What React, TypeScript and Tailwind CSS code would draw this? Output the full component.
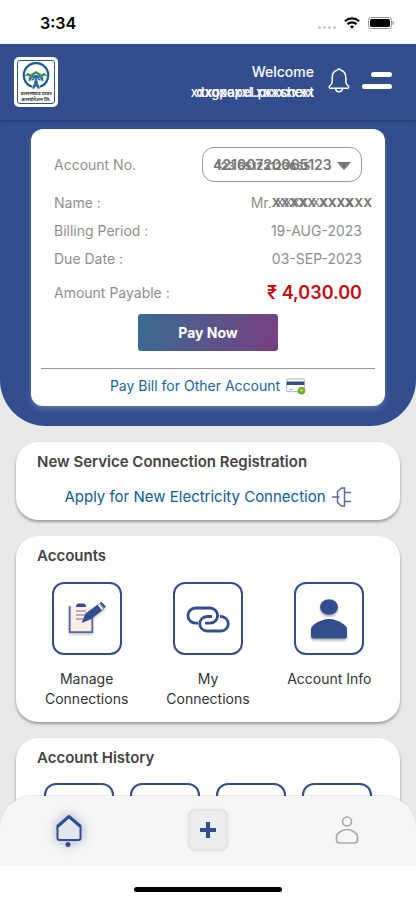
import type { ReactNode } from "react";

const INK = "#334e8f";

const Logo = () => (
  <div className="w-11 h-[50px] rounded-[5px] bg-white p-[3px]">
    <div className="flex h-full flex-col items-center rounded-[3px] border border-[#2d5590]">
      <svg viewBox="0 0 34 32" className="h-[29px] w-8 shrink-0" fill="none">
        <path d="M12.500 28.500A13.500 13.500 0 1 1 21.500 28.500" stroke="#1d5c9c" strokeWidth="2.400" />
        <path
          d="M2 19l6-6 3 2 6-4 6 4 3-2 6 6-5-3-4 2-6-4-6 4-4-2z"
          fill="#2e9440"
        />
        <path
          d="M9 22c-1-3 1-5 3-4 1-3.500 9-3.500 10 0 2-1 4 1 3 4l-4-1v1l-2-2v5l2 3.500v2h-2l-2-3-2 3h-2v-2l2-3.500v-5l-2 2v-1z"
          fill="#2b67a5"
        />
        <path d="M11 20.500l3-2M23 20.500l-3-2M15.500 19v3M18.500 19v3" stroke="#fff" strokeWidth="0.800" />
      </svg>
      <p className="text-center font-['Noto_Sans','Noto_Sans_Devanagari',sans-serif] text-[5px] leading-[6px] font-bold whitespace-nowrap text-[#333]">
        उत्तराखण्ड पावर
        <br />
        कारपोरेशन लि.
      </p>
    </div>
  </div>
);

const StatusBar = () => (
  <div className="flex h-11 shrink-0 items-center justify-between bg-white pt-[2px] pr-[22px] pl-10">
    <span className="text-base font-semibold text-black">3:34</span>
    <div className="flex items-center gap-2">
      <div className="flex gap-[2px] pt-2">
        {[0, 1, 2, 3].map((dot) => (
          <span key={dot} className="size-[3px] rounded-full bg-[#c4c4c4]" />
        ))}
      </div>
      <svg viewBox="0 0 16 12" className="h-3 w-4" fill="none" stroke="#000" strokeWidth="2.200">
        <path d="M1 4.200a10.200 10.200 0 0 1 14 0" />
        <path d="M3.500 7.100a6.500 6.500 0 0 1 9 0" />
        <path d="M8 11.800L5.800 9.600a3.200 3.200 0 0 1 4.400 0z" fill="#000" stroke="none" />
      </svg>
      <svg viewBox="0 0 26 12" className="h-3 w-[26px]">
        <rect x="0.500" y="0.500" width="23" height="11" rx="3" fill="#fff" stroke="#8d8d8d" />
        <rect x="2" y="2" width="20" height="8" rx="1.800" fill="#000" />
        <path d="M24.600 4c1.500.5 1.500 3.500 0 4z" fill="#777" />
      </svg>
    </div>
  </div>
);

const Header = () => (
  <header className="relative z-10 flex h-[76px] shrink-0 items-center bg-[#334e8f] pr-6 pl-[14px] text-white shadow-[0_1px_3px_rgba(0,0,0,0.3)]">
    <Logo />
    <div className="ml-auto text-right text-sm leading-5 font-medium">
      <p>Welcome</p>
      <p className="relative text-[13px]">
        dxgpapel.pxxshext
        <span aria-hidden="true" className="absolute top-0 right-0">
          xxxoxoxxl.xxxxxxxx
        </span>
      </p>
    </div>
    <button type="button" aria-label="Notifications" className="mb-1 ml-[14px]">
      <svg viewBox="0 0 22 26" className="h-[26px] w-[22px]" fill="none" stroke="#fff" strokeWidth="1.500" strokeLinejoin="round">
        <path d="M9.200 3.200a1.900 1.900 0 0 1 3.600 0c3.500.9 5 3.600 5 7v4.600c0 2 .8 3 2.600 4.400.9.9.4 2-.7 2H2.300c-1.100 0-1.600-1.100-.7-2 1.800-1.400 2.600-2.400 2.600-4.400v-4.600c0-3.400 1.500-6.100 5-7z" />
        <path d="M7.600 21.400c.4 4.600 6.400 4.600 6.800 0" />
      </svg>
    </button>
    <button type="button" aria-label="Menu" className="mb-1 ml-3 flex flex-col items-end gap-[7px]">
      <span className="h-[5px] w-[21px] rounded-full bg-white" />
      <span className="h-[5px] w-[30px] rounded-full bg-white" />
    </button>
  </header>
);

const Row = ({ label, children }: { label: string; children: ReactNode }) => (
  <div className="flex h-7 items-center justify-between">
    <dt>{label}</dt>
    <dd>{children}</dd>
  </div>
);

const BillCard = () => (
  <section className="rounded-b-[46px] bg-[#334e8f] px-[31px] pt-[9px] pb-5">
    <div className="rounded-xl bg-white px-[10px] pb-[10px] text-sm text-[#8e8e8e] shadow-[0_3px_5px_rgba(160,170,200,0.4)]">
      <div className="px-[13px] pt-[18px]">
        <div className="mb-[7px] flex items-center justify-between">
          <label htmlFor="account">Account No.</label>
          <div className="relative">
            <select
              id="account"
              className="h-[35px] w-40 appearance-none rounded-xl border border-[#999] bg-white pl-[10px] text-sm font-semibold text-[#777]"
            >
              <option>42100720065123</option>
            </select>
            <span aria-hidden="true" className="pointer-events-none absolute top-[11px] left-[14px] text-[11px] leading-4 font-bold text-[#777]">
              123 65123123655
            </span>
            <svg viewBox="0 0 14 8" className="pointer-events-none absolute top-[15px] right-[11px] h-2 w-[14px]">
              <path d="M0 0h14L8 7.200q-1 .8-2 0z" fill="#777" />
            </svg>
          </div>
        </div>
        <dl>
          <Row label="Name :">
            <span className="-mr-[10px] flex items-center">
              Mr.
              <span className="relative text-xs font-bold text-[#777]">
                XXXXX XXXXXX
                <span aria-hidden="true" className="absolute top-0 left-1 font-normal">
                  XXXX XXXXX
                </span>
              </span>
            </span>
          </Row>
          <Row label="Billing Period :">19-AUG-2023</Row>
          <Row label="Due Date :">03-SEP-2023</Row>
          <div className="mt-[6px]">
            <Row label="Amount Payable :">
              <span className="text-lg font-semibold text-[#c80a0f]">₹ 4,030.00</span>
            </Row>
          </div>
        </dl>
        <button
          type="button"
          className="mx-auto mt-[7px] block h-[37px] w-[140px] rounded-[3px] bg-linear-[100deg] from-[#396b91] to-[#793f82] text-sm font-bold text-white"
        >
          Pay Now
        </button>
      </div>
      <hr className="mt-[17px] mb-[7px] border-[#999]" />
      <a href="#other" className="flex h-5 items-center justify-center gap-[6px] text-sm text-[#1666a3]">
        Pay Bill for Other Account
        <svg viewBox="0 0 20 17" className="h-[17px] w-5">
          <rect x="0.700" y="1" width="17.600" height="12.600" rx="1" fill="#fff" stroke="#a9b1cc" />
          <path d="M0.700 3.500h17.600v3.500H.7z" fill="#334e8f" />
          <path d="M3 11.500h4" stroke="#a9b1cc" />
          <circle cx="15.500" cy="12.700" r="3.800" fill="#68ac1c" />
          <path d="M14 11.300h3M14 12.600h3M14.500 12.600l1.600 2" stroke="#d5ecb5" strokeWidth="0.700" />
        </svg>
      </a>
    </div>
  </section>
);

const Panel = ({ title, children }: { title: string; children: ReactNode }) => (
  <section className="rounded-[22px] bg-white px-[10px] pt-[10px] shadow-[0_2px_3px_rgba(0,0,0,0.35)]">
    <h2 className="pl-[11px] text-[15px] leading-5 font-semibold text-[#444]">{title}</h2>
    {children}
  </section>
);

const ManageIcon = () => (
  <svg viewBox="0 0 38 36" className="h-9 w-[38px] drop-shadow-[0_2px_1px_rgba(0,0,0,0.2)]">
    <path d="M2 6h22v25H2z" fill="#fbeee7" />
    <path d="M1.700 5v26.200h22.600V15" fill="none" stroke="#5465a4" strokeWidth="1.800" />
    <path d="M8 6q0-3.500 3-3.500h4q3 0 3 3.500z" fill={INK} />
    <path d="M8 10h10M8 14h10M8 18h7" stroke="#777078" strokeWidth="1.200" />
    <path d="M13.500 22l4-9.500L31 2.500l5 5.500L22.500 18.500z" fill={INK} />
    <path d="M30.500 3.500L34.500 8.500" stroke="#fff" strokeWidth="2" />
    <path d="M32.500 1.500l4.500 5" stroke={INK} strokeWidth="2.500" />
  </svg>
);

const LinkIcon = () => (
  <svg viewBox="0 0 44 28" className="h-7 w-11" fill="none" stroke={INK} strokeWidth="2.800">
    <path d="M12 18.200H9.500a7.300 7.300 0 0 1 0-15.200h14.500a7.300 7.300 0 0 1 0 15.200h-5" />
    <path d="M34 11.500h1a7 7 0 0 1 0 14.500H21a7 7 0 0 1 0-14.500h5" />
  </svg>
);

const PersonIcon = () => (
  <svg viewBox="0 0 36 42" className="h-[42px] w-9 drop-shadow-[0_2px_1px_rgba(0,0,0,0.3)]" fill={INK}>
    <ellipse cx="18" cy="9" rx="9" ry="7.800" />
    <path d="M0 38v-6.500q0-3 3-5 7.500-5.500 15-5.500t15 5.500q3 2 3 5V38q0 2.500-2.500 2.500h-31Q0 40.500 0 38z" />
  </svg>
);

const accounts = [
  { label: "Manage Connections", icon: <ManageIcon /> },
  { label: "My Connections", icon: <LinkIcon /> },
  { label: "Account Info", icon: <PersonIcon /> },
];

const history = ["Bills", "Payments", "Usage", "Requests"];

const BottomNav = () => (
  <nav className="relative z-20 -mt-8 shrink-0">
    <div className="grid h-[70px] grid-cols-3 place-items-center rounded-t-[32px] bg-[#f6f6f6] pb-[3px] shadow-[0_-1px_1px_rgba(0,0,0,0.08)]">
      <button type="button" aria-label="Home">
        <svg viewBox="0 0 28 34" className="h-[34px] w-7 drop-shadow-[0_0_6px_rgba(51,78,143,0.45)]" fill="none">
          <path d="M3 13L14 4l11 9v12.500q0 2-2 2H5q-2 0-2-2z" fill="#e3e6ef" />
          <path d="M2.500 12.500v12.500q0 2 2 2h19q2 0 2-2V12.500" stroke={INK} strokeWidth="2" />
          <path d="M2.500 13.500L14 3.500l11.500 10" stroke={INK} strokeWidth="3" strokeLinejoin="round" />
          <circle cx="13" cy="31.500" r="2.500" fill={INK} />
        </svg>
      </button>
      <button
        type="button"
        aria-label="Add"
        className="flex h-[42px] w-10 items-center justify-center rounded-lg bg-[#ededed] shadow-[inset_0_0_4px_rgba(0,0,0,0.1),0_0_3px_rgba(0,0,0,0.1)]"
      >
        <svg viewBox="0 0 16 16" className="size-4" stroke={INK} strokeWidth="4">
          <path d="M8 0v16M0 8h16" />
        </svg>
      </button>
      <button type="button" aria-label="Profile">
        <svg viewBox="0 0 24 28" className="h-7 w-6" fill="none" stroke="#a9a9a9" strokeWidth="1.700">
          <circle cx="12" cy="5.500" r="4.500" />
          <path d="M1.500 24v-3.500q0-2 1.500-3 4.500-4 9-4t9 4q1.500 1 1.500 3V24q0 3-3 3h-15q-3 0-3-3z" />
        </svg>
      </button>
    </div>
    <div className="flex h-[34px] items-end justify-center bg-white pb-2">
      <div className="h-[5px] w-[148px] rounded-full bg-black" />
    </div>
  </nav>
);

const App = () => (
  <div className="flex h-screen flex-col overflow-hidden bg-[#e9e9e9] font-[Inter,'Noto_Sans',sans-serif]">
    <StatusBar />
    <Header />
    <main className="min-h-0 flex-1 overflow-y-auto [scrollbar-width:none]">
      <BillCard />
      <div className="flex flex-col gap-4 px-4 pt-4 pb-12">
        <Panel title="New Service Connection Registration">
          <a href="#apply" className="mt-[15px] mb-[13px] flex h-5 items-center justify-center gap-[6px] text-[15px] text-[#0f5b9d]">
            Apply for New Electricity Connection
            <svg viewBox="0 0 20 20" className="size-5" fill="none" stroke="#5d6a9e" strokeWidth="1.500">
              <path d="M12.500 1H9.500L5.500 4.500v11l4 3.500h3zM0 10h7.500M12.500 5.500H19M12.500 14.500H19" />
            </svg>
          </a>
        </Panel>
        <Panel title="Accounts">
          <div className="grid grid-cols-3 pt-4 pb-[13px]">
            {accounts.map(({ label, icon }) => (
              <button key={label} type="button" className="flex flex-col items-center gap-[14px]">
                <span className="flex h-[73px] w-[70px] items-center justify-center rounded-xl border-2 border-[#334e8f]">
                  {icon}
                </span>
                <span className="w-24 text-sm leading-5 text-[#333]">{label}</span>
              </button>
            ))}
          </div>
        </Panel>
        <Panel title="Account History">
          <div className="flex justify-between px-[18px] pt-[15px] pb-5">
            {history.map((item) => (
              <button
                key={item}
                type="button"
                aria-label={item}
                className="h-[73px] w-[70px] rounded-xl border-2 border-[#334e8f]"
              />
            ))}
          </div>
        </Panel>
      </div>
    </main>
    <BottomNav />
  </div>
);

export default App;
